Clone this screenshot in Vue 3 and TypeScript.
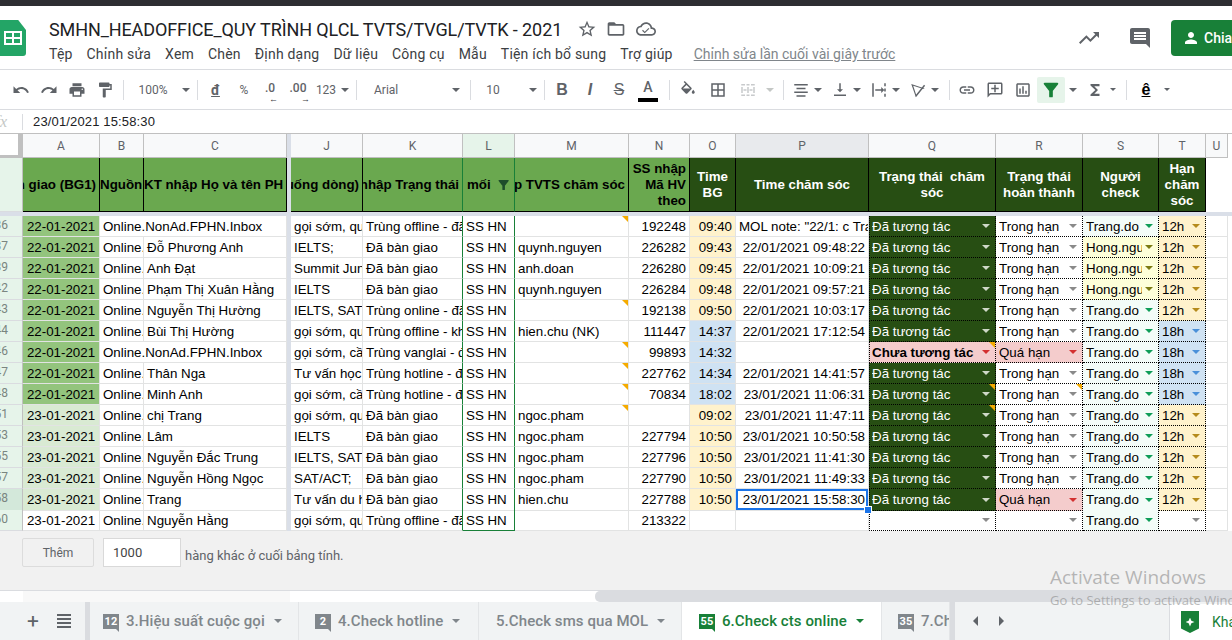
<template>
  <div class="page">
    <div class="top-strip"></div>

    <header class="doc-header">
      <div class="logo"><div class="logo-table"><i></i><i></i><i></i><i></i></div></div>
      <div class="doc-info">
        <div class="title-row">
          <span class="doc-title">SMHN_HEADOFFICE_QUY TRÌNH QLCL TVTS/TVGL/TVTK - 2021</span>
          <svg class="title-icon star" viewBox="0 0 24 24"><path :d="icons.star" /></svg>
          <svg class="title-icon folder" viewBox="0 0 24 24"><path :d="icons.folder" /></svg>
          <svg class="title-icon cloud" viewBox="0 0 24 24"><path :d="icons.cloud" /></svg>
        </div>
        <nav class="menu-row">
          <span v-for="m in menus" :key="m">{{ m }}</span>
          <a class="last-edit">Chỉnh sửa lần cuối vài giây trước</a>
        </nav>
      </div>
      <div class="doc-actions">
        <svg class="action-icon" viewBox="0 0 24 24"><path :d="icons.trend" /></svg>
        <svg class="action-icon comment" viewBox="0 0 24 24"><path :d="icons.comment" /></svg>
        <button class="share">
          <svg viewBox="0 0 24 24"><path :d="icons.person" /></svg>
          <span>Chia</span>
        </button>
      </div>
    </header>

    <div class="toolbar">
      <div
        v-for="(t, i) in tools"
        :key="i"
        class="tool"
        :class="t.cls"
        :style="{ width: t.w + 'px' }"
      >
        <svg v-if="t.d" viewBox="0 0 24 24"><path :d="t.d" /></svg>
        <span v-else-if="t.label">{{ t.label }}</span>
      </div>
    </div>

    <div class="formula-bar">
      <span class="fx">fx</span>
      <span class="formula-sep"></span>
      <span class="formula-value">23/01/2021 15:58:30</span>
    </div>

    <div class="sheet">
      <div class="grid-row col-heads">
        <div class="corner"></div>
        <template v-for="c in columns" :key="c">
          <div v-if="c === '|'" class="band"></div>
          <div v-else class="col-head" :class="{ 'col-l': c === 'L', 'col-p': c === 'P' }">{{ c }}</div>
        </template>
        <div class="blank"></div>
      </div>

      <div class="grid-row head-row">
        <div class="row-num head-num"></div>
        <div class="hd green right">Thời gian bàn giao (BG1)</div>
        <div class="hd green left">Nguồn</div>
        <div class="hd green left">KT nhập Họ và tên PH</div>
        <div class="band"></div>
        <div class="hd green right">Ghi chú (xuống dòng)</div>
        <div class="hd green right k-edge">KT nhập Trạng thái</div>
        <div class="hd green l-head">mối
          <svg viewBox="0 0 24 24"><path :d="icons.filter" /></svg>
        </div>
        <div class="hd green right">Nhập TVTS chăm sóc</div>
        <div class="hd green right wrap">SS nhập Mã HV theo</div>
        <div class="hd dark center wrap">Time BG</div>
        <div class="hd dark center wrap">Time chăm sóc</div>
        <div class="hd dark center wrap">Trạng thái&nbsp; chăm sóc</div>
        <div class="hd dark center wrap">Trạng thái hoàn thành</div>
        <div class="hd dark center wrap">Người check</div>
        <div class="hd dark center wrap">Hạn chăm sóc</div>
        <div class="blank"></div>
        <div class="blank"></div>
      </div>

      <div class="freeze-line"></div>

      <div v-for="(r, i) in rows" :key="r.num" class="grid-row data-row">
        <div class="row-num" :class="{ current: r.num === 58 }"><span>{{ r.num }}</span></div>
        <div class="cell date" :class="dateClass(r, i)">{{ r.date }}</div>
        <div class="cell" :class="{ 'span-2': r.inbox }">{{ r.inbox ? 'Online.NonAd.FPHN.Inbox' : 'Online.NonAd' }}</div>
        <div v-if="!r.inbox" class="cell">{{ r.name }}</div>
        <div class="band"></div>
        <div class="cell">{{ r.need }}</div>
        <div class="cell k-edge">{{ r.status }}</div>
        <div class="cell l-cell" :class="{ last: i === rows.length - 1 }">SS HN</div>
        <div class="cell" :class="{ note: r.noteM }">{{ r.owner }}</div>
        <div class="cell num">{{ r.code }}</div>
        <div class="cell num" :class="timeClass(r.time)">{{ r.time }}</div>
        <div class="cell" :class="{ num: !r.mol, selected: r.num === 58 }">
          {{ r.care }}
          <b v-if="r.num === 58" class="handle"></b>
        </div>
        <div class="cell drop q" :class="[qClass(r.q), { note: r.noteQ }]">
          <span>{{ r.q }}</span><i></i>
        </div>
        <div class="cell drop" :class="[r.r === 'Quá hạn' ? 'over' : '', { note: r.noteR }]">
          <span>{{ r.r }}</span><i></i>
        </div>
        <div class="cell drop" :class="r.s === 'Trang.do' ? 's-trang' : 's-hong'">
          <span>{{ r.s }}</span><i></i>
        </div>
        <div class="cell drop" :class="r.t === '12h' ? 't-12' : r.t === '18h' ? 't-18' : ''">
          <span>{{ r.t }}</span><i></i>
        </div>
        <div class="cell u"></div>
        <div class="blank"></div>
      </div>

      <div class="add-rows">
        <button class="add-btn">Thêm</button>
        <div class="add-input">1000</div>
        <span class="add-text">hàng khác ở cuối bảng tính.</span>
      </div>

      <div class="h-scroll">
        <div class="scroll-frozen"></div>
        <div class="scroll-track"></div>
        <div class="scroll-thumb"></div>
      </div>
    </div>

    <footer class="tabs">
      <div class="tab-controls">
        <span class="plus">+</span>
        <span class="all-sheets"><i></i><i></i><i></i><i></i></span>
      </div>
      <div class="tab-band"></div>
      <div
        v-for="t in tabs"
        :key="t.name"
        class="tab"
        :class="{ active: t.active }"
        :style="{ width: t.w + 'px', paddingLeft: t.pad + 'px' }"
      >
        <span v-if="t.badge" class="badge">{{ t.badge }}</span>
        <span class="tab-name">{{ t.name }}</span>
        <i v-if="t.caret" class="tab-caret"></i>
      </div>
      <div class="tab-band"></div>
      <div class="tab-nav">
        <i class="nav-left"></i>
        <i class="nav-right"></i>
      </div>
      <div class="explore">
        <span class="explore-icon"><b></b></span>
        <span class="explore-text">Khám phá</span>
      </div>
    </footer>

    <div class="activate">
      <div class="activate-title">Activate Windows</div>
      <div class="activate-sub">Go to Settings to activate Windows.</div>
    </div>
  </div>
</template>

<script setup lang="ts">
interface Tool {
  w: number
  cls?: string
  d?: string
  label?: string
}

interface Row {
  num: number
  date: string
  name: string
  inbox?: boolean
  need: string
  status: string
  owner: string
  code: string
  time: string
  care: string
  mol?: boolean
  q: string
  r: string
  s: string
  t: string
  noteM?: boolean
  noteQ?: boolean
  noteR?: boolean
}

const icons = {
  star: 'M22 9.24l-7.19-.62L12 2 9.19 8.63 2 9.24l5.46 4.73L5.82 21 12 17.27 18.18 21l-1.63-7.03L22 9.24zM12 15.4l-3.76 2.27 1-4.28-3.32-2.88 4.38-.38L12 6.1l1.71 4.04 4.38.38-3.32 2.88 1 4.28L12 15.4z',
  folder: 'M20 6h-8l-2-2H4c-1.1 0-1.99.9-1.99 2L2 18c0 1.1.9 2 2 2h16c1.1 0 2-.9 2-2V8c0-1.1-.9-2-2-2zm0 12H4V8h16v10z',
  cloud: 'M19.35 10.04C18.67 6.59 15.64 4 12 4 9.11 4 6.6 5.64 5.35 8.04 2.34 8.36 0 10.91 0 14c0 3.31 2.69 6 6 6h13c2.76 0 5-2.24 5-5 0-2.64-2.05-4.78-4.65-4.96zM19 18H6c-2.21 0-4-1.79-4-4s1.79-4 4-4h.71C7.37 7.69 9.48 6 12 6c3.04 0 5.5 2.46 5.5 5.5v.5H19c1.66 0 3 1.34 3 3s-1.34 3-3 3zM10.5 15.2l-2.2-2.2-1 1 3.2 3.2 5.5-5.5-1-1z',
  trend: 'M16 6l2.29 2.29-4.88 4.88-4-4L2 16.59 3.41 18l6-6 4 4 6.3-6.29L22 12V6z',
  comment: 'M21.99 4c0-1.1-.89-2-1.99-2H4c-1.1 0-2 .9-2 2v12c0 1.1.9 2 2 2h14l4 4-.01-18zM18 14H6v-2h12v2zm0-3H6V9h12v2zm0-3H6V6h12v2z',
  person: 'M12 12c2.21 0 4-1.79 4-4s-1.79-4-4-4-4 1.79-4 4 1.79 4 4 4zm0 2c-2.67 0-8 1.34-8 4v2h16v-2c0-2.66-5.33-4-8-4z',
  filter: 'M4.25 5.61C6.27 8.2 10 13 10 13v6c0 .55.45 1 1 1h2c.55 0 1-.45 1-1v-6s3.72-4.8 5.74-7.39c.51-.66.04-1.61-.79-1.61H5.04c-.83 0-1.3.95-.79 1.61z',
}

const menus = ['Tệp', 'Chỉnh sửa', 'Xem', 'Chèn', 'Định dạng', 'Dữ liệu', 'Công cụ', 'Mẫu', 'Tiện ích bổ sung', 'Trợ giúp']

const arrow = (w: number): Tool => ({ w, cls: 'caret' })
const sep: Tool = { w: 8, cls: 'sep' }
const gap = (w: number): Tool => ({ w })

const tools: Tool[] = [
  { w: 28, d: 'M12.5 8c-2.65 0-5.05.99-6.9 2.6L2 7v9h9l-3.62-3.62c1.39-1.16 3.16-1.88 5.12-1.88 3.54 0 6.55 2.31 7.6 5.5l2.37-.78C21.08 11.03 17.15 8 12.5 8z' },
  { w: 28, d: 'M18.4 10.6C16.55 8.99 14.15 8 11.5 8c-4.65 0-8.58 3.03-9.96 7.22L3.9 16c1.05-3.19 4.05-5.5 7.6-5.5 1.95 0 3.73.72 5.12 1.88L13 16h9V7l-3.6 3.6z' },
  { w: 28, d: 'M19 8H5c-1.66 0-3 1.34-3 3v6h4v4h12v-4h4v-6c0-1.66-1.34-3-3-3zm-3 11H8v-5h8v5zm3-7c-.55 0-1-.45-1-1s.45-1 1-1 1 .45 1 1-.45 1-1 1zm-1-9H6v4h12V3z' },
  { w: 28, d: 'M18 4V3c0-.55-.45-1-1-1H5c-.55 0-1 .45-1 1v4c0 .55.45 1 1 1h12c.55 0 1-.45 1-1V6h1v4H9v11c0 .55.45 1 1 1h2c.55 0 1-.45 1-1v-9h8V4h-3z' },
  sep,
  { w: 52, label: '100%', cls: 'small-text' },
  arrow(14),
  sep,
  { w: 29, label: 'đ', cls: 'dong' },
  { w: 28, label: '%', cls: 'small-text' },
  { w: 24, label: '.0', cls: 'dec dec-l' },
  { w: 32, label: '.00', cls: 'dec dec-r' },
  { w: 24, label: '123', cls: 'small-text' },
  arrow(14),
  sep,
  { w: 86, label: 'Arial', cls: 'small-text font-name' },
  arrow(20),
  sep,
  { w: 38, label: '10', cls: 'small-text' },
  gap(13),
  arrow(15),
  sep,
  { w: 28, label: 'B', cls: 'fmt bold' },
  { w: 28, label: 'I', cls: 'fmt italic' },
  { w: 30, label: 'S', cls: 'fmt strike' },
  { w: 28, label: 'A', cls: 'text-color' },
  gap(3),
  sep,
  { w: 30, d: 'M16.56 8.94L7.62 0 6.21 1.41l2.38 2.38-5.15 5.15c-.59.59-.59 1.54 0 2.12l5.5 5.5c.29.29.68.44 1.06.44s.77-.15 1.06-.44l5.5-5.5c.59-.58.59-1.53 0-2.12zM5.21 10L10 5.21 14.79 10H5.21zM19 11.5s-2 2.17-2 3.5c0 1.1.9 2 2 2s2-.9 2-2c0-1.33-2-3.5-2-3.5z' },
  { w: 30, d: 'M3 3v18h18V3H3zm8 16H5v-6h6v6zm0-8H5V5h6v6zm8 8h-6v-6h6v6zm0-8h-6V5h6v6z' },
  { w: 30, cls: 'disabled', d: 'M3 4h5v2H3zM10 4h4v2h-4zM16 4h5v2h-5zM3 18h5v2H3zM10 18h4v2h-4zM16 18h5v2h-5zM3 8h2v8H3zM19 8h2v8h-2zM11 8h2v8h-2zM6 11h4v2H6zM14 11h4v2h-4z' },
  { w: 14, cls: 'caret disabled-caret' },
  gap(2),
  sep,
  { w: 28, d: 'M3 4h18v2H3zM6 9h12v2H6zM3 14h18v2H3zM6 19h12v2H6z' },
  arrow(6),
  gap(5),
  { w: 28, d: 'M16 11h-3V3h-2v8H8l4 4 4-4zM4 18v2h16v-2H4z' },
  arrow(6),
  gap(5),
  { w: 28, d: 'M3 3h2v18H3zM19 3h2v4h-2zM19 10h2v4h-2zM19 17h2v4h-2zM7 11h8V8l4 4-4 4v-3H7z' },
  arrow(6),
  gap(5),
  { w: 28, d: 'M3 4l18 6-2 .8L5.6 6.2 10 19.5l-.8 2zM8 20L20 5l1.5 1.2L9.5 21.2z' },
  arrow(6),
  gap(7),
  sep,
  { w: 28, d: 'M3.9 12c0-1.71 1.39-3.1 3.1-3.1h4V7H7c-2.76 0-5 2.24-5 5s2.24 5 5 5h4v-1.9H7c-1.71 0-3.1-1.39-3.1-3.1zM8 13h8v-2H8v2zm9-6h-4v1.9h4c1.71 0 3.1 1.39 3.1 3.1s-1.39 3.1-3.1 3.1h-4V17h4c2.76 0 5-2.24 5-5s-2.24-5-5-5z' },
  { w: 28, d: 'M20 2H4c-1.1 0-2 .9-2 2v18l4-4h14c1.1 0 2-.9 2-2V4c0-1.1-.9-2-2-2zm0 14H5.17L4 17.17V4h16v12zM13 5h-2v4H7v2h4v4h2v-4h4V9h-4z' },
  { w: 28, d: 'M19 3H5c-1.1 0-2 .9-2 2v14c0 1.1.9 2 2 2h14c1.1 0 2-.9 2-2V5c0-1.1-.9-2-2-2zm0 16H5V5h14v14zM7 10h2v7H7zm4-3h2v10h-2zm4 6h2v4h-2z' },
  { w: 28, cls: 'filter-on', d: icons.filter },
  arrow(16),
  { w: 28, d: 'M18 4H6v2l6.5 6L6 18v2h12v-3h-7l5-5-5-5h7z' },
  { w: 8, cls: 'caret small-caret' },
  gap(5),
  sep,
  { w: 32, label: 'ê', cls: 'fmt bold input-tool' },
  { w: 10, cls: 'caret small-caret' },
]

const columns = ['A', 'B', 'C', '|', 'J', 'K', 'L', 'M', 'N', 'O', 'P', 'Q', 'R', 'S', 'T', 'U']

const ok = 'Đã tương tác'
const inTime = 'Trong hạn'
const given = 'Đã bàn giao'

const rows: Row[] = [
  { num: 36, date: '22-01-2021', name: '', inbox: true, need: 'gọi sớm, quan tâm', status: 'Trùng offline - đã xử lý', owner: '', code: '192248', time: '09:40', care: 'MOL note: "22/1: c Trang gọi lại', mol: true, q: ok, r: inTime, s: 'Trang.do', t: '12h', noteM: true },
  { num: 37, date: '22-01-2021', name: 'Đỗ Phương Anh', need: 'IELTS;', status: given, owner: 'quynh.nguyen', code: '226282', time: '09:43', care: '22/01/2021 09:48:22', q: ok, r: inTime, s: 'Hong.nguyen', t: '12h' },
  { num: 39, date: '22-01-2021', name: 'Anh Đạt', need: 'Summit Junior', status: given, owner: 'anh.doan', code: '226280', time: '09:45', care: '22/01/2021 10:09:21', q: ok, r: inTime, s: 'Hong.nguyen', t: '12h' },
  { num: 42, date: '22-01-2021', name: 'Phạm Thị Xuân Hằng', need: 'IELTS', status: given, owner: 'quynh.nguyen', code: '226284', time: '09:48', care: '22/01/2021 09:57:21', q: ok, r: inTime, s: 'Hong.nguyen', t: '12h' },
  { num: 43, date: '22-01-2021', name: 'Nguyễn Thị Hường', need: 'IELTS, SAT', status: 'Trùng online - đã xử lý', owner: '', code: '192138', time: '09:50', care: '22/01/2021 10:03:17', q: ok, r: inTime, s: 'Trang.do', t: '12h', noteM: true },
  { num: 44, date: '22-01-2021', name: 'Bùi Thị Hường', need: 'gọi sớm, quan tâm', status: 'Trùng offline - khác', owner: 'hien.chu (NK)', code: '111447', time: '14:37', care: '22/01/2021 17:12:54', q: ok, r: inTime, s: 'Trang.do', t: '18h' },
  { num: 46, date: '22-01-2021', name: '', inbox: true, need: 'gọi sớm, cần tư vấn', status: 'Trùng vanglai - đã xử lý', owner: '', code: '99893', time: '14:32', care: '', q: 'Chưa tương tác', r: 'Quá hạn', s: 'Trang.do', t: '18h', noteM: true, noteQ: true },
  { num: 47, date: '22-01-2021', name: 'Thân Nga', need: 'Tư vấn học', status: 'Trùng hotline - đã xử lý', owner: '', code: '227762', time: '14:34', care: '22/01/2021 14:41:57', q: ok, r: inTime, s: 'Trang.do', t: '18h', noteM: true },
  { num: 48, date: '22-01-2021', name: 'Minh Anh', need: 'gọi sớm, cần tư vấn', status: 'Trùng hotline - đã xử lý', owner: '', code: '70834', time: '18:02', care: '23/01/2021 11:06:31', q: ok, r: inTime, s: 'Trang.do', t: '18h', noteM: true, noteQ: true, noteR: true },
  { num: 51, date: '23-01-2021', name: 'chị Trang', need: 'gọi sớm, quan tâm', status: given, owner: 'ngoc.pham', code: '', time: '09:02', care: '23/01/2021 11:47:11', q: ok, r: inTime, s: 'Trang.do', t: '12h', noteM: true, noteQ: true },
  { num: 53, date: '23-01-2021', name: 'Lâm', need: 'IELTS', status: given, owner: 'ngoc.pham', code: '227794', time: '10:50', care: '23/01/2021 10:50:58', q: ok, r: inTime, s: 'Trang.do', t: '12h' },
  { num: 55, date: '23-01-2021', name: 'Nguyễn Đắc Trung', need: 'IELTS, SAT', status: given, owner: 'ngoc.pham', code: '227796', time: '10:50', care: '23/01/2021 11:41:30', q: ok, r: inTime, s: 'Trang.do', t: '12h' },
  { num: 57, date: '23-01-2021', name: 'Nguyễn Hồng Ngọc', need: 'SAT/ACT;', status: given, owner: 'ngoc.pham', code: '227790', time: '10:50', care: '23/01/2021 11:49:33', q: ok, r: inTime, s: 'Trang.do', t: '12h' },
  { num: 58, date: '23-01-2021', name: 'Trang', need: 'Tư vấn du học', status: given, owner: 'hien.chu', code: '227788', time: '10:50', care: '23/01/2021 15:58:30', q: ok, r: 'Quá hạn', s: 'Trang.do', t: '12h' },
  { num: 60, date: '23-01-2021', name: 'Nguyễn Hằng', need: 'gọi sớm, quan tâm', status: 'Trùng offline - đã xử lý', owner: '', code: '213322', time: '', care: '', q: '', r: '', s: 'Trang.do', t: '' },
]

const tabs = [
  { name: '3.Hiệu suất cuộc gọi', badge: '12', w: 209, pad: 13, caret: true },
  { name: '4.Check hotline', badge: '2', w: 180, pad: 16, caret: true },
  { name: '5.Check sms qua MOL', badge: '', w: 203, pad: 17, caret: true },
  { name: '6.Check cts online', badge: '55', w: 200, pad: 17, caret: true, active: true },
  { name: '7.Check', badge: '35', w: 68, pad: 16, caret: false },
]

const dateClass = (r: Row, i: number) => {
  if (i === rows.length - 1) return ''
  return r.date.startsWith('22') ? 'date-22' : 'date-23'
}

const timeClass = (t: string) => {
  if (!t) return ''
  return t.startsWith('14') || t.startsWith('18') ? 'time-late' : 'time-early'
}

const qClass = (q: string) => {
  if (q === ok) return 'done'
  return q ? 'over bold-text' : ''
}
</script>

<style>
html,
body {
  margin: 0;
  overflow: hidden;
}
</style>

<style scoped>
.page {
  position: relative;
  width: 1232px;
  height: 640px;
  overflow: hidden;
  background: #fff;
  font-family: Roboto, "Liberation Sans", sans-serif;
}

.top-strip {
  height: 6px;
  background: #2d2e32;
}

.doc-header {
  display: flex;
  height: 64px;
  box-sizing: border-box;
  border-bottom: 1px solid #dadce0;
}

.logo {
  position: relative;
  flex: none;
  width: 26px;
  height: 36px;
  margin-top: 14px;
  background: #23a566;
  border-radius: 0 0 3px 0;
  clip-path: polygon(0 0, 70% 0, 100% 28%, 100% 100%, 0 100%);
  display: flex;
  align-items: center;
  justify-content: center;
}

.logo-table {
  display: grid;
  grid-template-columns: 6px 6px;
  grid-auto-rows: 4px;
  gap: 2px;
  padding: 2px;
  background: #fff;
}

.logo-table i {
  background: #23a566;
}

.doc-info {
  margin-left: 23px;
  flex: 1;
}

.title-row {
  display: flex;
  align-items: center;
  height: 32px;
  margin-top: 7px;
}

.doc-title {
  font-size: 18px;
  letter-spacing: -.1px;
  color: #202124;
  width: 512px;
  white-space: nowrap;
}

.title-icon {
  width: 20px;
  height: 20px;
  fill: #5f6368;
}

.star {
  margin-left: 16px;
}

.folder {
  margin-left: 9px;
}

.cloud {
  margin-left: 10px;
}

.menu-row {
  display: flex;
  gap: 14px;
  font-size: 14px;
  letter-spacing: .2px;
  line-height: 18px;
  color: #3c4043;
  white-space: nowrap;
}

.last-edit {
  margin-left: 7px;
  letter-spacing: 0;
  color: #80868b;
  text-decoration: underline;
}

.doc-actions {
  display: flex;
  align-items: center;
  flex: none;
}

.action-icon {
  width: 24px;
  height: 24px;
  fill: #5f6368;
  margin-right: 27px;
}

.action-icon.comment {
  margin-right: 19px;
}

.share {
  display: flex;
  align-items: center;
  gap: 4px;
  width: 61px;
  height: 36px;
  padding: 0 0 0 11px;
  border: 0;
  border-radius: 4px 0 0 4px;
  background: #188038;
  color: #fff;
  font: 500 14px Roboto, sans-serif;
}

.share svg {
  width: 18px;
  height: 18px;
  fill: #fff;
  flex: none;
}

.toolbar {
  display: flex;
  align-items: center;
  height: 40px;
  padding-left: 7px;
  box-sizing: border-box;
  border-bottom: 1px solid #dadce0;
}

.tool {
  position: relative;
  flex: none;
  display: flex;
  align-items: center;
  justify-content: center;
  height: 26px;
  color: #444746;
}

.tool svg {
  width: 18px;
  height: 18px;
  fill: #5f6368;
  flex: none;
}

.tool.sep::before {
  content: "";
  width: 1px;
  height: 20px;
  background: #dadce0;
}

.tool.caret::before {
  content: "";
  flex: none;
  border: 4px solid transparent;
  border-top-color: #5f6368;
  border-bottom: 0;
}

.tool.small-caret::before {
  border-width: 3px;
  border-bottom: 0;
}

.tool.disabled-caret::before {
  border-top-color: #c4c7c5;
}

.tool.disabled svg {
  fill: #c8cacc;
}

.small-text {
  font-size: 12px;
  color: #5f6368;
}

.font-name {
  justify-content: flex-start;
  padding-left: 14px;
  box-sizing: border-box;
}

.dong {
  font-size: 14px;
  font-weight: 700;
  color: #5f6368;
  text-decoration: underline;
}

.dec {
  font-size: 12px;
  font-weight: 500;
  color: #5f6368;
  padding-bottom: 4px;
  box-sizing: border-box;
}

.dec::after {
  position: absolute;
  bottom: -1px;
  font-size: 9px;
  font-weight: 700;
  color: #3c4043;
  line-height: 10px;
}

.dec-l::after {
  content: "←";
  left: 11px;
}

.dec-r::after {
  content: "→";
  right: 4px;
}

.fmt {
  font-family: "Liberation Sans", sans-serif;
  font-size: 16px;
  color: #5f6368;
}

.bold {
  font-weight: 700;
}

.italic {
  font-style: italic;
  font-weight: 700;
}

.strike {
  text-decoration: line-through;
}

.text-color {
  font-size: 14px;
  font-weight: 500;
  color: #5f6368;
  align-items: flex-start;
  padding-top: 2px;
  box-sizing: border-box;
}

.text-color::after {
  content: "";
  position: absolute;
  left: 4px;
  bottom: 1px;
  width: 20px;
  height: 4px;
  background: #000;
}

.filter-on {
  background: #e6f4ea;
  border-radius: 2px;
}

.tool.filter-on svg {
  fill: #188038;
  width: 22px;
  height: 22px;
}

.input-tool {
  color: #000;
  text-decoration: underline;
}

.formula-bar {
  display: flex;
  align-items: center;
  height: 24px;
  box-sizing: border-box;
  border-bottom: 1px solid #c0c0c0;
}

.fx {
  width: 22px;
  margin-left: -15px;
  text-align: right;
  padding-right: 15px;
  box-sizing: content-box;
  font: italic 16px "Liberation Serif", serif;
  color: #c4c7c5;
}

.formula-sep {
  width: 1px;
  height: 16px;
  background: #dadce0;
}

.formula-value {
  margin-left: 10px;
  font: 13px "Liberation Sans", sans-serif;
  letter-spacing: .15px;
  color: #202124;
}

.sheet {
  background: #f1f1f1;
  height: 468px;
}

.grid-row {
  display: grid;
  grid-template-columns: 23px 77px 44px 143px 4px 72px 100px 52px 114px 61px 46px 133px 127px 87px 76px 47px 22px 4px;
}

.col-heads {
  height: 24px;
  background: #fff;
}

.corner {
  background: #fff;
  border-right: 5px solid #c0c0c0;
  border-bottom: 3px solid #c0c0c0;
  box-sizing: border-box;
}

.col-head {
  display: flex;
  align-items: center;
  justify-content: center;
  box-sizing: border-box;
  background: #f8f9fa;
  border-right: 1px solid #c0c0c0;
  border-bottom: 1px solid #c0c0c0;
  font-size: 12px;
  color: #5f6368;
}

.col-l {
  background: #e6f4ea;
}

.col-p {
  background: #e8eaed;
}

.band {
  background: #dadfe8;
}

.blank {
  background: #fff;
}

.head-row {
  height: 54px;
  background: #fff;
}

.hd {
  display: flex;
  align-items: center;
  box-sizing: border-box;
  overflow: hidden;
  white-space: nowrap;
  font: 700 13.33px/16px "Liberation Sans", sans-serif;
  border-right: 1px solid #000;
  border-bottom: 1px solid #000;
  padding: 0 3px;
  color: #000;
}

.hd.green {
  background: #6aa84f;
}

.hd.dark {
  background: #274e13;
  color: #fff;
}

.hd.right {
  justify-content: flex-end;
}

.hd.left {
  padding: 0;
  justify-content: flex-start;
}

.hd.center {
  justify-content: center;
  text-align: center;
}

.hd.wrap {
  white-space: normal;
}

.hd.green.wrap {
  text-align: right;
}

.hd.k-edge,
.hd.l-head {
  border-right-color: #188038;
}

.l-head {
  padding-left: 4px;
  gap: 4px;
}

.l-head svg {
  width: 16px;
  height: 16px;
  fill: #1e4d2b;
  margin-left: 1px;
}

.freeze-line {
  height: 4px;
  background: #dadfe8;
}

.data-row {
  height: 21px;
  background: #fff;
}

.row-num {
  position: relative;
  overflow: hidden;
  background: #e6f4ea;
  border-right: 1px solid #c0c0c0;
  border-bottom: 1px solid #dadce0;
  box-sizing: border-box;
  font-size: 12px;
  line-height: 18px;
  color: #7a8580;
}

.row-num span {
  position: absolute;
  right: 14px;
}

.row-num.current {
  background: #d3e8da;
}

.head-num {
  background: #e6f4ea;
}

.cell {
  position: relative;
  box-sizing: border-box;
  overflow: hidden;
  white-space: nowrap;
  padding: 1px 3px 0;
  font: 13.33px/20px "Liberation Sans", sans-serif;
  color: #000;
  border-right: 1px solid #e2e3e3;
  border-bottom: 1px solid #e2e3e3;
}

.span-2 {
  grid-column: span 2;
}

.date {
  padding: 1px 0 0;
  text-align: center;
}

.date-22 {
  background: #93c47d;
}

.date-23 {
  background: #d9ead3;
}

.num {
  text-align: right;
}

.time-early {
  background: #fff2cc;
}

.time-late {
  background: #cfe2f3;
}

.k-edge {
  border-right-color: #188038;
}

.l-cell {
  border-right-color: #188038;
}

.l-cell.last {
  border-bottom-color: #188038;
}

.note::after {
  content: "";
  position: absolute;
  top: 0;
  right: 0;
  border-top: 6px solid #f5ab00;
  border-left: 6px solid transparent;
}

.selected {
  overflow: visible;
  z-index: 2;
  box-shadow: inset 0 0 0 2px #1a73e8;
}

.handle {
  position: absolute;
  right: -4px;
  bottom: -4px;
  width: 6px;
  height: 6px;
  background: #1a73e8;
  border: 1px solid #fff;
}

.drop {
  display: flex;
  align-items: center;
  justify-content: space-between;
  border-right: 1px dotted #000;
  border-bottom: 1px dotted #000;
}

.drop span {
  overflow: hidden;
  flex: 1;
}

.drop i {
  flex: none;
  margin: 0 2px 1px 3px;
  border: 4.5px solid transparent;
  border-top: 4.5px solid #8a8a8a;
  border-bottom: 0;
}

.q {
  padding-left: 2px;
  border-left: 1px dotted #000;
}

.done {
  background: #274e13;
  color: #fff;
}

.done i {
  border-top-color: #cfd8c8;
}

.over {
  background: #f4cccc;
}

.over i {
  border-top-color: #d32f2f;
}

.bold-text {
  font-weight: 700;
}

.s-trang {
  background: #f3fcf8;
}

.s-trang i {
  border-top-color: #0f9d58;
}

.s-hong {
  background: #fdffd9;
}

.s-hong i {
  border-top-color: #7b7b12;
}

.t-12 {
  background: #fff2cc;
}

.t-12 i {
  border-top-color: #b58a1c;
}

.t-18 {
  background: #cfe2f3;
}

.t-18 i {
  border-top-color: #4a90d9;
}

.add-rows {
  display: flex;
  align-items: flex-start;
  height: 60px;
  padding: 7px 0 0 22px;
  box-sizing: border-box;
  border-bottom: 1px solid #dadce0;
}

.add-btn {
  width: 72px;
  height: 29px;
  background: #f1f1f1;
  border: 1px solid #dcdcdc;
  border-radius: 2px;
  font: 12px Roboto, sans-serif;
  color: #5f6368;
}

.add-input {
  width: 78px;
  height: 29px;
  box-sizing: border-box;
  margin-left: 9px;
  padding-left: 9px;
  background: #fff;
  border: 1px solid #d9d9d9;
  font: 13px/27px Roboto, sans-serif;
  color: #444;
}

.add-text {
  margin-left: 4px;
  margin-top: 10px;
  font-size: 13px;
  line-height: 15px;
  color: #5f6368;
}

.h-scroll {
  display: flex;
  height: 11px;
  background: #fff;
}

.scroll-frozen {
  width: 290px;
  background: #f8f8f8;
  border-left: 23px solid #fff;
  box-sizing: border-box;
}

.scroll-track {
  width: 305px;
}

.scroll-thumb {
  flex: 1;
  background: #dadce0;
  border-radius: 5px 0 0 5px;
}

.tabs {
  display: flex;
  align-items: stretch;
  height: 38px;
  background: #f1f3f4;
}

.tab-controls {
  position: relative;
  width: 85px;
  display: flex;
  align-items: center;
  flex: none;
  color: #5f6368;
}

.plus {
  margin-left: 26px;
  font-size: 21px;
  line-height: 20px;
  width: 14px;
  text-align: center;
}

.all-sheets {
  display: grid;
  gap: 2px;
  margin-left: 17px;
  width: 14px;
}

.all-sheets i {
  height: 2px;
  background: #5f6368;
}

.tab-band {
  width: 5px;
  flex: none;
  background: #dadce0;
}

.tab {
  display: flex;
  align-items: center;
  flex: none;
  box-sizing: border-box;
  overflow: hidden;
  border-right: 1px solid #e3e5e7;
  font-size: 15px;
  font-weight: 500;
  letter-spacing: .08px;
  color: #80868b;
  white-space: nowrap;
}

.tab.active {
  background: #fff;
  color: #188038;
}

.badge {
  position: relative;
  flex: none;
  width: 16px;
  height: 15px;
  margin-right: 7px;
  background: #80868b;
  color: #fff;
  font: 700 11px/15px Roboto, sans-serif;
  text-align: center;
}

.badge::after {
  content: "";
  position: absolute;
  right: 0;
  bottom: -3px;
  border-top: 3px solid #80868b;
  border-left: 3px solid transparent;
}

.active .badge {
  background: #188038;
}

.active .badge::after {
  border-top-color: #188038;
}

.tab-caret {
  flex: none;
  margin-left: 9px;
  border: 4px solid transparent;
  border-top: 4px solid #80868b;
  border-bottom: 0;
}

.active .tab-caret {
  border-top-color: #188038;
}

.tab-nav {
  display: flex;
  align-items: center;
  gap: 21px;
  padding-left: 18px;
  width: 214px;
  box-sizing: border-box;
  flex: none;
}

.tab-nav i {
  border: 5px solid transparent;
}

.nav-left {
  border-right-color: #5f6368 !important;
  border-left-width: 0 !important;
}

.nav-right {
  border-left-color: #5f6368 !important;
  border-right-width: 0 !important;
}

.explore {
  display: flex;
  align-items: center;
  flex: 1;
  margin-top: 2px;
  padding-left: 11px;
  background: #fff;
  border-left: 1px solid #dadce0;
  overflow: hidden;
  white-space: nowrap;
}

.explore-icon {
  position: relative;
  flex: none;
  display: flex;
  align-items: center;
  justify-content: center;
  width: 18px;
  height: 22px;
  background: #188038;
  clip-path: polygon(0 0, 100% 0, 100% 80%, 50% 100%, 0 80%);
}

.explore-icon b {
  width: 9px;
  height: 9px;
  background: #fff;
  clip-path: polygon(50% 0, 65% 35%, 100% 50%, 65% 65%, 50% 100%, 35% 65%, 0 50%, 35% 35%);
}

.explore-text {
  margin-left: 13px;
  font-size: 14px;
  color: #188038;
}

.activate {
  position: absolute;
  left: 1050px;
  top: 565px;
  white-space: nowrap;
  font-family: "Open Sans", sans-serif;
  color: rgba(120, 120, 120, .5);
  pointer-events: none;
}

.activate-title {
  font-size: 19px;
  line-height: 25px;
}

.activate-sub {
  font-size: 13px;
  line-height: 20px;
}
</style>
